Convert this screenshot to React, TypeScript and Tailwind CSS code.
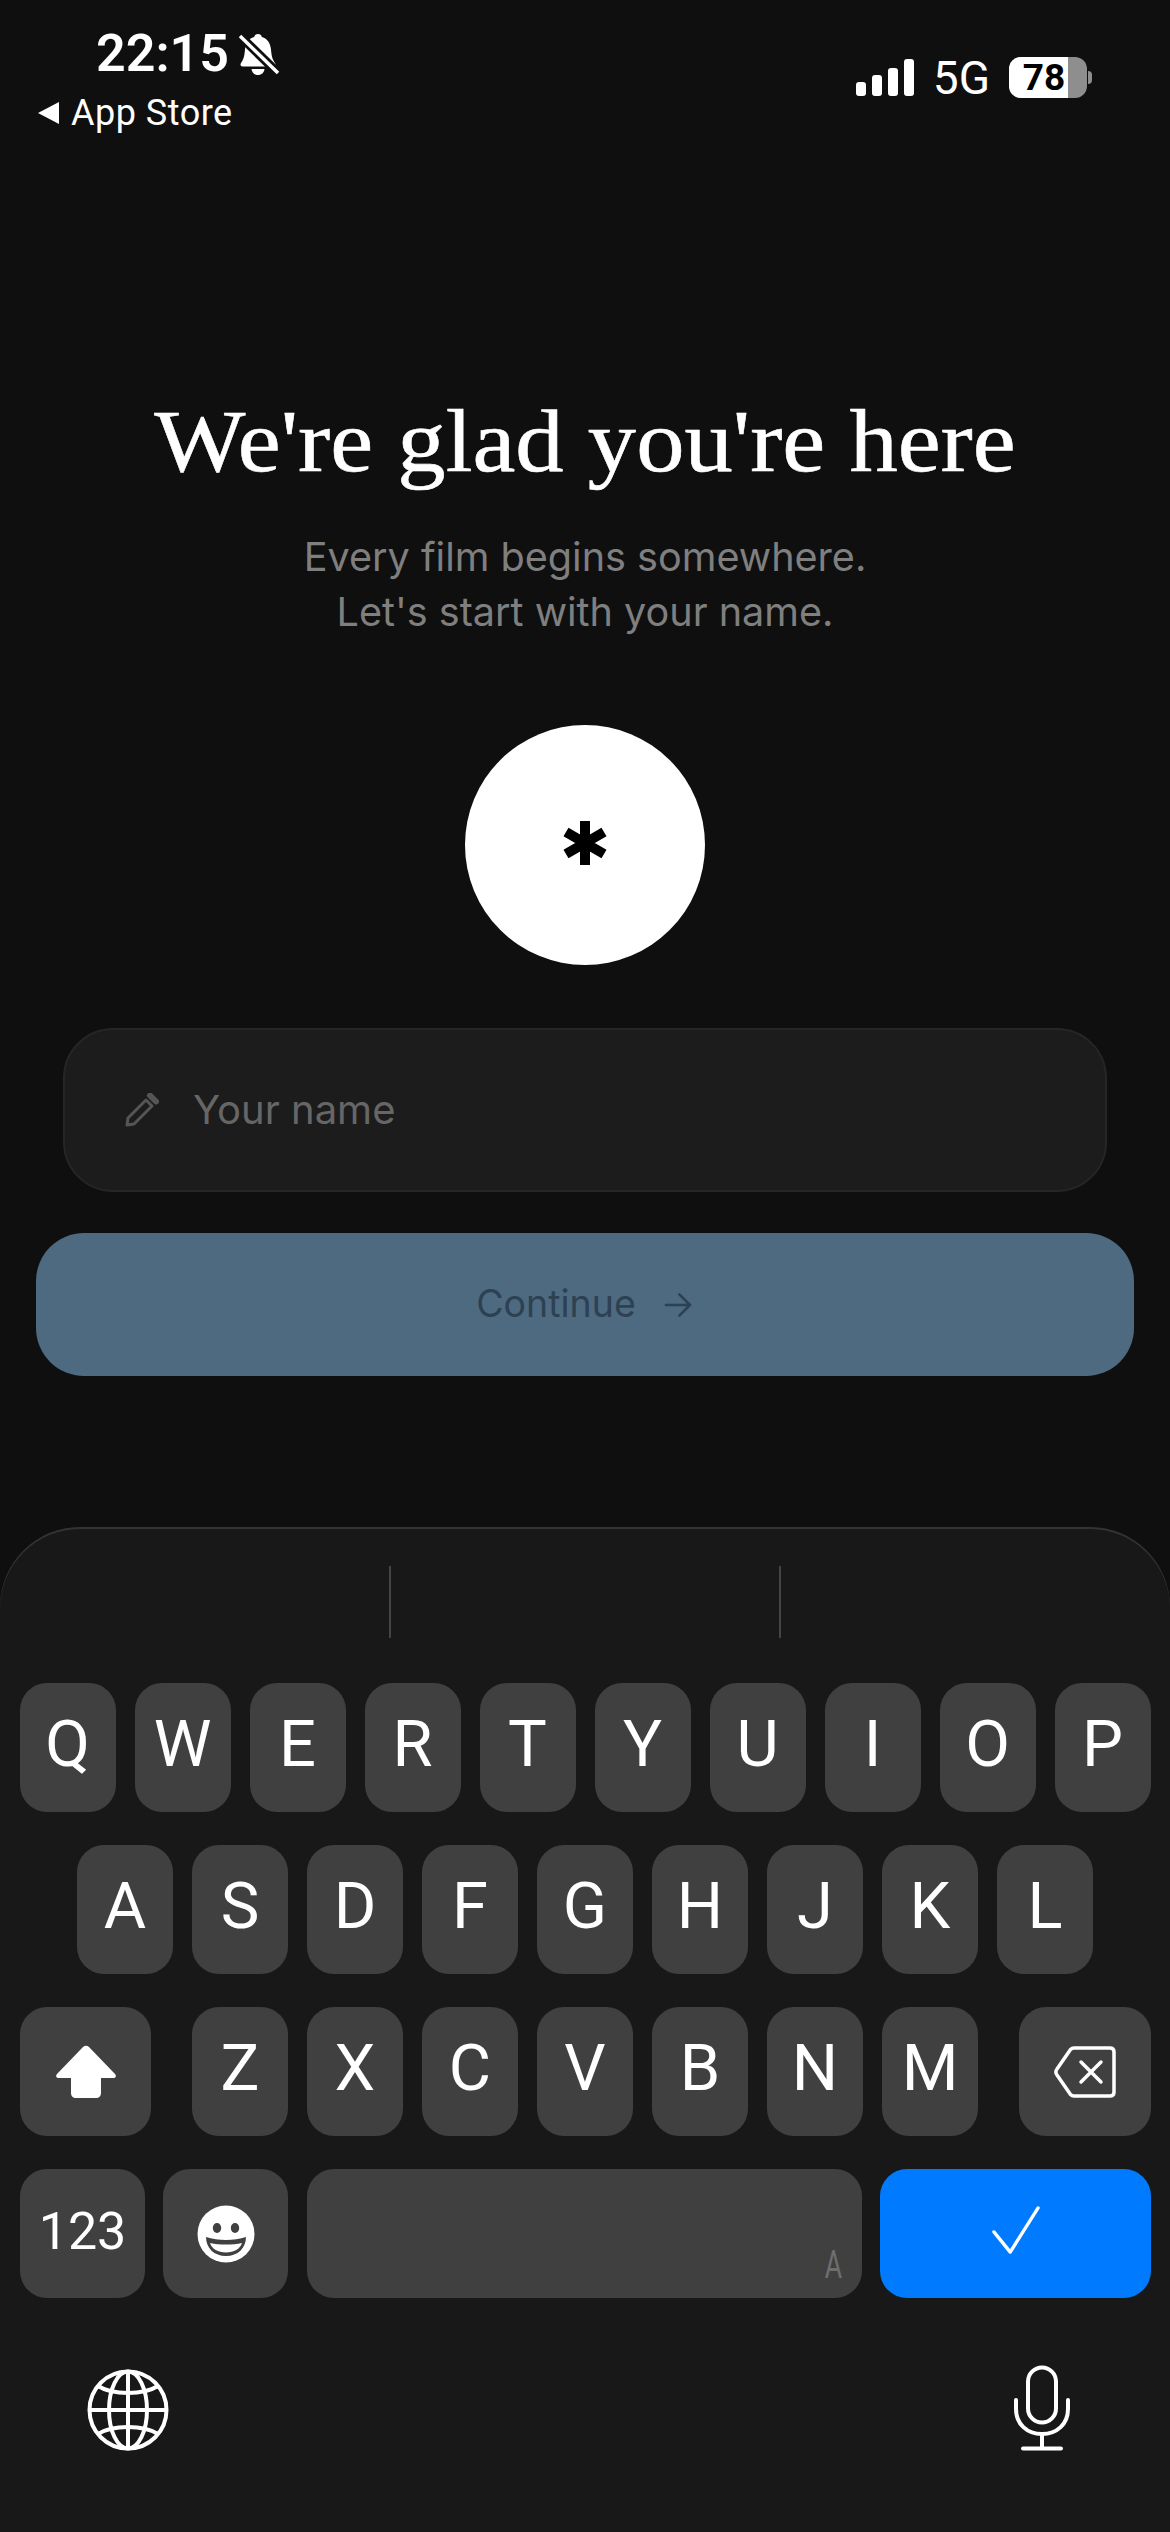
import { ReactNode } from "react";

const rows = ["QWERTYUIOP", "ASDFGHJKL", "ZXCVBNM"];

const Key = ({ children, className = "w-[96px]" }: { children?: ReactNode; className?: string }) => (
  <div className={`relative h-[129px] shrink-0 flex items-center justify-center rounded-[27px] bg-[#404040] text-white ${className}`}>
    {children}
  </div>
);

const Letter = ({ c }: { c: string }) => (
  <Key>
    <span className="text-[65px] leading-none -mt-[7px]">{c}</span>
  </Key>
);

const BellSlash = () => (
  <svg width="44" height="44" viewBox="0 0 44 44" className="ml-[9px]">
    <path d="M20 2c2 0 3.500 1.200 3.800 3 6 1.500 8.700 7 9.200 12.500.5 6.500 1.500 10 4 13.500 1 1.500 .5 3.500-1.500 3.500H4.500c-2 0-2.500-2-1.500-3.500 2.500-3.500 3.500-7 4-13.500C7.500 12 10.200 6.500 16.200 5c.3-1.800 1.800-3 3.800-3z" fill="#fff" />
    <path d="M13.500 37h13c-.5 3.800-3 6-6.500 6s-6-2.200-6.500-6z" fill="#fff" />
    <path d="M2 4l38 37" stroke="#0f0f10" strokeWidth="9" />
    <path d="M2 4l38 37" stroke="#fff" strokeWidth="3.500" />
  </svg>
);

const Signal = () => (
  <div className="flex items-end gap-[6px]">
    <div className="w-[10px] h-[14px] rounded-[3px] bg-white" />
    <div className="w-[10px] h-[21px] rounded-[3px] bg-white" />
    <div className="w-[10px] h-[28px] rounded-[3px] bg-white" />
    <div className="w-[10px] h-[37px] rounded-[3px] bg-white" />
  </div>
);

const Battery = () => (
  <div className="flex items-center gap-[1px]">
    <div className="relative w-[78px] h-[41px] rounded-[12px] overflow-hidden bg-[#8e8e8e] flex items-center justify-center">
      <div className="absolute left-0 top-0 bottom-0 w-[59px] bg-white" />
      <span className="relative text-[37px] font-bold leading-none text-black pr-[8px]">78</span>
    </div>
    <div className="w-[4px] h-[13px] rounded-r-full bg-[#8e8e8e]" />
  </div>
);

const Shift = () => (
  <svg width="62" height="54" viewBox="0 0 62 54" fill="#fff">
    <path d="M28 2c1.700-1.800 4.300-1.800 6 0l26 27c1.500 1.600 1 4-1.500 4H46v15c0 3-2 5-5 5H21c-3 0-5-2-5-5V33H3.500C1 33 .5 30.600 2 29z" />
  </svg>
);

const Backspace = () => (
  <svg width="62" height="52" viewBox="0 0 62 52" fill="none" stroke="#fff" strokeWidth="3.500" strokeLinecap="round" strokeLinejoin="round">
    <path d="M20 2h36c2.500 0 4 1.500 4 4v40c0 2.500-1.500 4-4 4H20c-1.500 0-2.500-.5-3.500-1.500L3 29c-1.500-2-1.500-4 0-6L16.500 3.500C17.500 2.500 18.500 2 20 2z" />
    <path d="M27 16l20 20M47 16L27 36" />
  </svg>
);

const Emoji = () => (
  <svg width="58" height="58" viewBox="0 0 58 58">
    <circle cx="29" cy="29" r="28.500" fill="#fff" />
    <ellipse cx="20" cy="23" rx="4.200" ry="5" fill="#404040" />
    <ellipse cx="38" cy="23" rx="4.200" ry="5" fill="#404040" />
    <path d="M9 32c6 2 13 3 20 3s14-1 20-3c0 11-8 19-20 19S9 43 9 32z" fill="#404040" />
    <path d="M13 38c5 1 10 1.500 16 1.500S40 39 45 38c-2 6-8 9.500-16 9.500S15 44 13 38z" fill="#fff" />
  </svg>
);

const Globe = () => (
  <svg width="82" height="82" viewBox="0 0 82 82" fill="none" stroke="#fff" strokeWidth="4">
    <circle cx="41" cy="41" r="38.500" />
    <ellipse cx="41" cy="41" rx="19" ry="38.500" />
    <path d="M41 2.500v77M2.500 41h77" />
    <path d="M11 17c8 5 18 7 30 7s22-2 30-7M11 65c8-5 18-7 30-7s22 2 30 7" />
  </svg>
);

const Mic = () => (
  <svg width="58" height="86" viewBox="0 0 58 86" fill="none" stroke="#fff" strokeWidth="4" strokeLinecap="round">
    <rect x="15" y="2.500" width="28" height="55" rx="14" />
    <path d="M3 35v9c0 15 11 25 26 25s26-10 26-25v-9" />
    <path d="M29 69v14M10 83.500h38" />
  </svg>
);

export default function App() {
  return (
    <div className="relative h-[2532px] w-[1170px] overflow-hidden bg-[#0f0f10] font-['Inter',sans-serif] flex flex-col">
      {/* status bar */}
      <div className="flex justify-between pt-[28px] pl-[38px] pr-[78px] font-['Roboto',sans-serif] text-white h-[140px]">
        <div>
          <div className="flex items-center pl-[58px] h-[52px]">
            <span className="text-[52px] font-semibold leading-none">22:15</span>
            <BellSlash />
          </div>
          <div className="flex items-center gap-[12px] mt-[11px]">
            <div className="w-0 h-0 border-y-[11px] border-y-transparent border-r-[21px] border-r-white" />
            <span className="text-[36px] leading-[44px] tracking-[0.5px]">App Store</span>
          </div>
        </div>
        <div className="flex items-center gap-[19px] h-[41px] mt-[29px]">
          <Signal />
          <span className="text-[46px] leading-none">5G</span>
          <Battery />
        </div>
      </div>

      {/* heading */}
      <h1 className="mt-[252px] text-center text-[88px] leading-[100px] text-white font-['Liberation_Serif',serif] scale-x-[1.098] [-webkit-text-stroke:0.6px_white]">
        We're glad you're here
      </h1>
      <p className="mt-[38px] text-center text-[39.600px] leading-[55px] text-[#7f7f7f]">
        Every film begins somewhere.
        <br />
        Let's start with your name.
      </p>

      {/* logo */}
      <div className="mt-[85px] self-center w-[240px] h-[240px] rounded-full bg-white flex items-center justify-center">
        <svg width="44" height="44" viewBox="0 0 44 44" stroke="#000" strokeWidth="10" className="-mt-[4px]">
          <path d="M22 0v44M3 11l38 22M41 11L3 33" />
        </svg>
      </div>

      {/* form */}
      <div className="mt-[63px] mx-[63px] h-[164px] rounded-[50px] bg-[#1c1c1c] border-2 border-[#262626] flex items-center pl-[60px]">
        <svg width="34" height="34" viewBox="0 0 34 34" fill="none" stroke="#555" strokeWidth="3" strokeLinejoin="round">
          <path d="M21 7l6 6L9 31l-7 1 1-7z" />
          <path d="M25 2.500l6 6" strokeWidth="6" strokeLinecap="round" />
        </svg>
        <span className="ml-[34px] text-[40px] text-[#666]">Your name</span>
      </div>
      <div className="mt-[41px] mx-[36px] h-[143px] rounded-[48px] bg-[#4d6a80] flex items-center justify-center gap-[26px] text-[#2e4152]">
        <span className="text-[37.500px]">Continue</span>
        <svg width="32" height="32" viewBox="0 0 24 24" fill="none" stroke="currentColor" strokeWidth="2" strokeLinecap="round" strokeLinejoin="round">
          <path d="M3 12h18M13 4l8 8-8 8" />
        </svg>
      </div>

      {/* keyboard */}
      <div className="mt-auto h-[1005px] rounded-t-[80px] bg-[#181818] shadow-[inset_0_2px_0_#333] font-['Roboto',sans-serif] flex flex-col items-center">
        <div className="h-[156px] w-[392px] shrink-0 flex justify-between pt-[39px]">
          <div className="w-[2px] h-[72px] bg-[#444]" />
          <div className="w-[2px] h-[72px] bg-[#444]" />
        </div>
        <div className="flex flex-col gap-[33px] w-full">
          <div className="flex justify-center gap-[19px]">
            {rows[0].split("").map((c) => <Letter key={c} c={c} />)}
          </div>
          <div className="flex justify-center gap-[19px]">
            {rows[1].split("").map((c) => <Letter key={c} c={c} />)}
          </div>
          <div className="flex justify-between pl-[20px] pr-[19px]">
            <Key className="w-[131px]"><Shift /></Key>
            <div className="flex gap-[19px]">
              {rows[2].split("").map((c) => <Letter key={c} c={c} />)}
            </div>
            <Key className="w-[132px]"><Backspace /></Key>
          </div>
          <div className="flex gap-[18px] pl-[20px] pr-[19px]">
            <Key className="w-[125px]"><span className="text-[52px] leading-none -mt-[3px]">123</span></Key>
            <Key className="w-[125px]"><Emoji /></Key>
            <Key className="w-[555px] ml-[1px]">
              <span className="absolute right-[16px] bottom-[14px] text-[38px] leading-none text-[#6e6e6e] scale-x-[0.7]">A</span>
            </Key>
            <Key className="flex-1 !bg-[#007aff]">
              <svg width="48" height="48" viewBox="0 0 50 50" fill="none" stroke="#fff" strokeWidth="3.500" strokeLinecap="round" strokeLinejoin="round" className="-mt-[8px]">
                <path d="M2 27l17 21L48 2" />
              </svg>
            </Key>
          </div>
        </div>
        <div className="w-full flex justify-between pl-[87px] pr-[99px] mt-[65px]">
          <div className="mt-[6px]"><Globe /></div>
          <div className="mt-[2px]"><Mic /></div>
        </div>
      </div>
    </div>
  );
}
